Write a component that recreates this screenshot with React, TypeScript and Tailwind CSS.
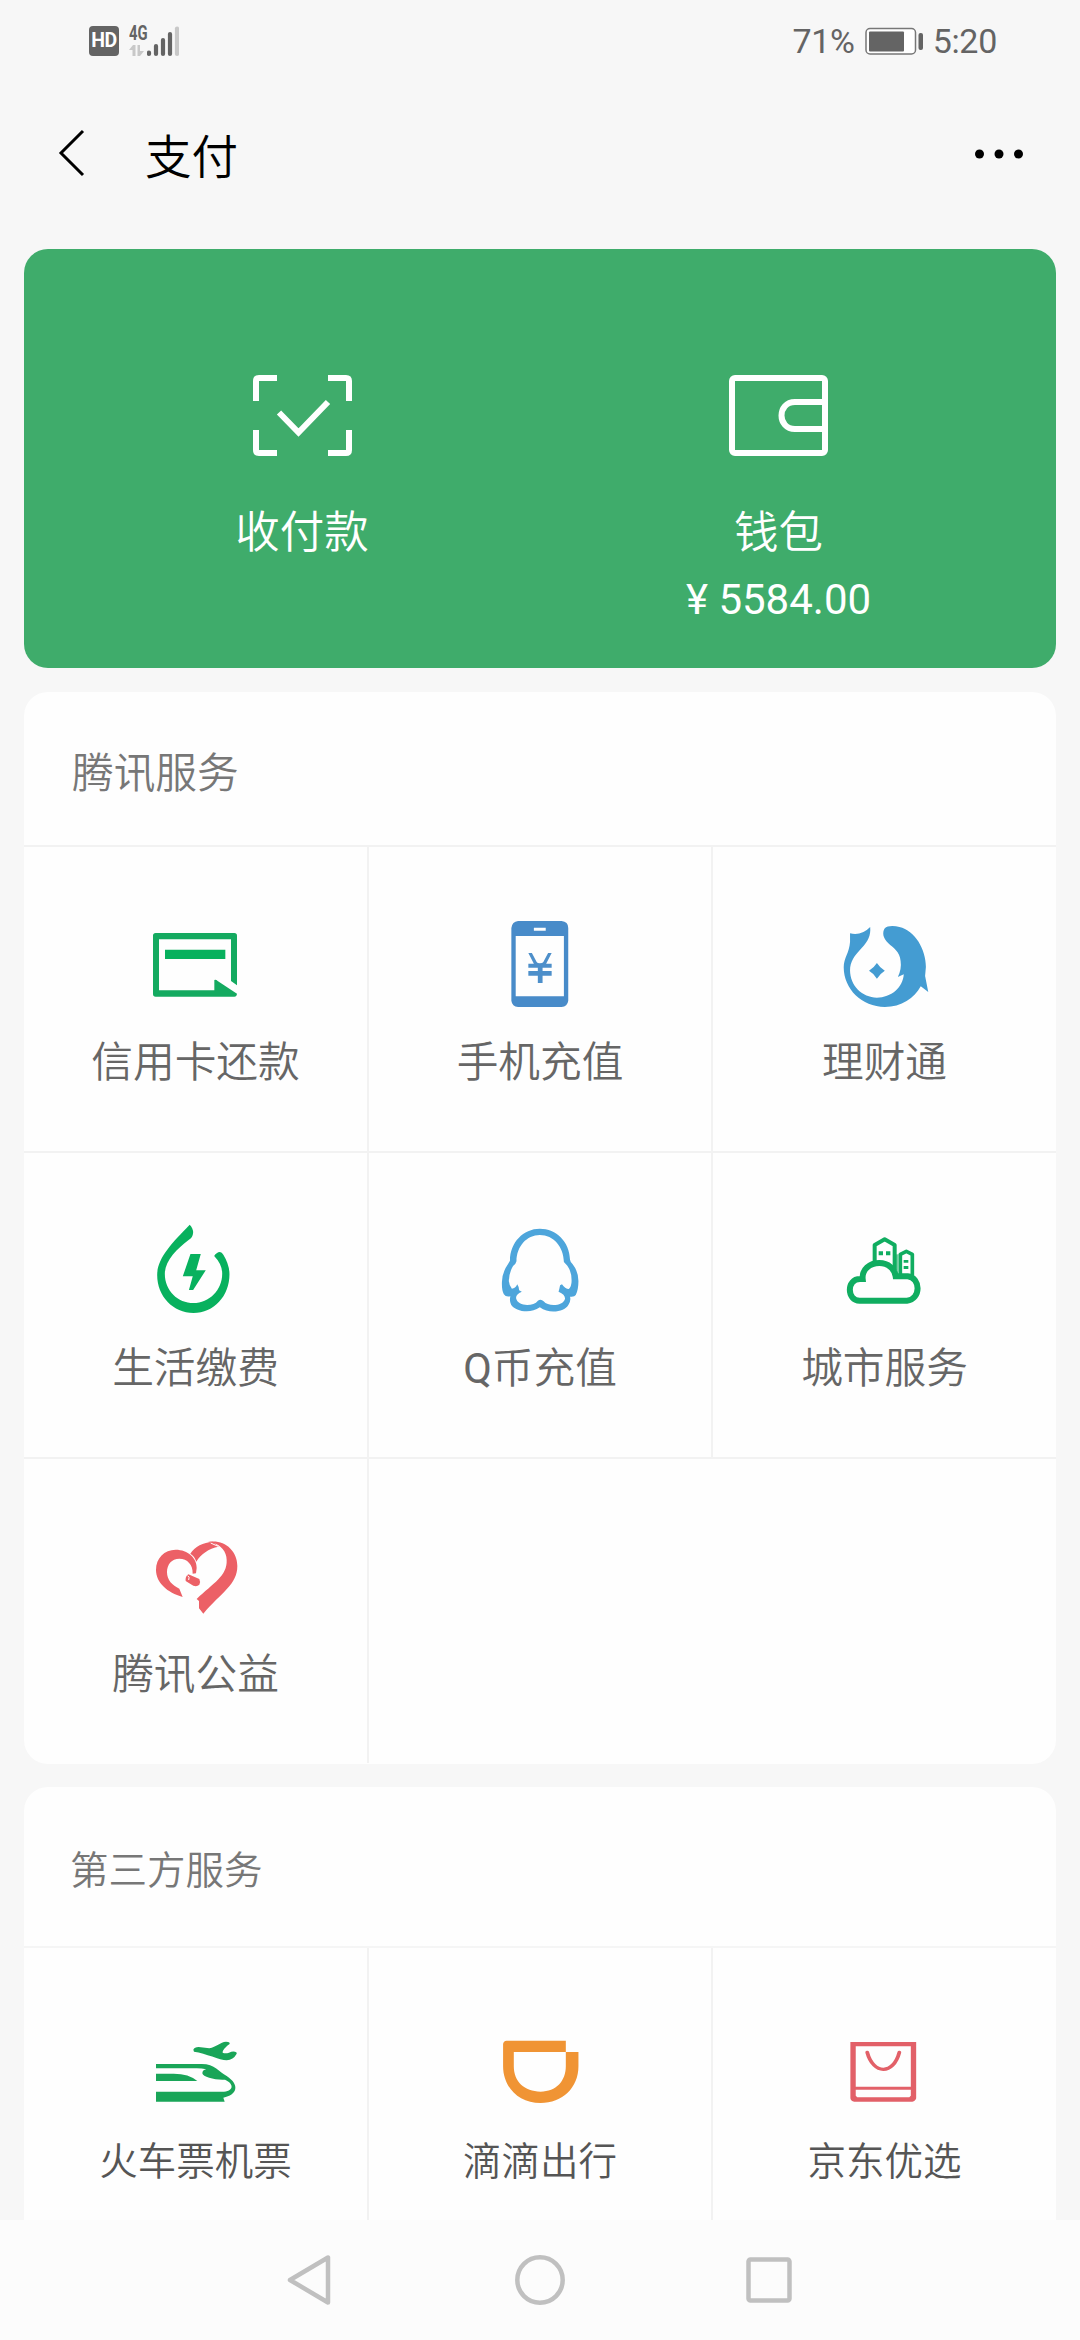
import type { ReactNode } from "react";

const GREEN = "#08b15e";

type IconProps = {
    viewBox: string;
    children: ReactNode;
};

const Icon = ({ viewBox, children }: IconProps) => (
    <svg className="w-24 h-24 shrink-0" viewBox={viewBox} preserveAspectRatio="none" fill="none">
        {children}
    </svg>
);

const CreditCardIcon = () => (
    <Icon viewBox="264 111 288 288">
        <path
            fill="#14aa60"
            d="M287 162H523Q531 162 531 170V319L513 306V181H297V334H463V303Q468 301 473 306L531 344Q530 353 523 353H287Q279 353 279 345V170Q279 162 287 162Z"
        />
        <path fill={GREEN} d="M315 212H496V240H315Z" />
    </Icon>
);

const PhoneIcon = () => (
    <Icon viewBox="233 111 243 288">
        <path
            fill="#488bc9"
            fillRule="evenodd"
            d="M299 126H409Q426 128 426 147V365Q424 382 409 384H299Q284 382 282 365V147Q284 128 299 126ZM293 171V352H415V171ZM339 146V155H369V146Z"
        />
        <path
            fill="#4d8fca"
            d="M325 222H334L346 249Q348 253 354 253Q361 253 363 249L375 222H384L370 254H384V266H361V276H384V290H361V312H349V290H325V276H349V266H325V254H339Z"
        />
    </Icon>
);

const FishIcon = () => (
    <Icon viewBox="1103 111 243 288">
        <path
            fill="#449cd2"
            d="M1136 163Q1165 171 1187 144C1189 170 1181 188 1166 206C1147 230 1136 247 1136 274C1136 320 1167 356 1204 356C1240 356 1270 326 1272 286L1257 294Q1267 270 1264 246C1262 217 1245 207 1233 193C1219 178 1217 160 1224 148C1230 139 1248 139 1261 144C1300 155 1328 210 1328 264L1326 291L1334 339L1315 322C1299 358 1266 384 1224 384C1166 384 1120 330 1120 265C1120 237 1134 222 1136 189Z"
        />
        <path fill="#449cd2" d="M1204 252Q1212 267 1224 275Q1213 283 1204 299Q1196 283 1184 275Q1196 267 1204 252Z" />
    </Icon>
);

const UtilitiesIcon = () => (
    <Icon viewBox="230 96 251 288">
        <path
            fill={GREEN}
            d="M339 104Q348 114 348 128Q347 143 337 149C304 177 274 214 274 251C274 302 308 339 349 339C390 339 424 300 424 251Q424 223 403 198Q409 187 418 186Q423 187 427 194Q443 224 443 253C443 319 402 369 349 369C296 369 254 319 254 255C254 206 289 163 339 104Z"
        />
        <path fill={GREEN} d="M341 192H368L356 241H381L348 300H337L347 259H321Z" />
    </Icon>
);

const PenguinIcon = () => (
    <Icon viewBox="1129 96 251 288">
        <path
            fill="#4da5db"
            fillRule="evenodd"
            d="M1254 116C1297 116 1332 155 1333 209Q1334 217 1340 223Q1355 245 1355 273Q1355 299 1348 315Q1344 322 1333 320Q1336 332 1329 344C1320 364 1281 374 1254 352C1229 373 1190 364 1179 344Q1174 334 1177 319Q1165 322 1160 313Q1154 300 1155 275Q1156 246 1171 222L1176 212C1176 157 1211 116 1254 116ZM1254 135C1220 135 1193 169 1193 214Q1192 221 1184 228Q1173 250 1173 273Q1174 287 1181 296Q1190 296 1195 283Q1200 291 1200 301L1207 305Q1191 312 1192 325C1196 350 1237 351 1249 332Q1257 326 1264 334C1276 351 1315 349 1320 326Q1320 313 1303 305Q1305 298 1307 286L1312 283Q1320 297 1330 297Q1338 287 1337 269Q1337 245 1326 227L1317 216C1316 170 1290 135 1254 135Z"
        />
    </Icon>
);

const CityIcon = () => (
    <Icon viewBox="228 96 288 288">
        <g stroke="#10ad60" strokeLinejoin="round">
            <path
                strokeWidth="18"
                strokeLinejoin="miter"
                d="M296 332C257 332 256 267 297 267H305C302 239 326 219 355 219C382 219 401 237 404 259H440C480 263 480 328 438 332Z"
            />
            <path strokeWidth="12" d="M341 216V165L371 148L401 165V240" />
            <path strokeWidth="11" d="M418 256V193L436 184L454 193V258" />
            <path strokeWidth="8" d="M408 193V250" opacity=".6" />
        </g>
        <path fill="#10ad60" d="M353 184H366V196H353ZM375 184H388V196H375ZM428 210H442V218H428ZM428 228H442V237H428Z" />
    </Icon>
);

const HeartIcon = () => (
    <Icon viewBox="264 81 288 288">
        <g fill="#ec6066">
            <path d="M368 288C322 275 288 245 288 207C288 171 313 146 347 146C384 146 411 171 410 201L408 217L398 218C399 191 382 173 358 173C335 173 321 190 321 214C321 237 337 254 358 263Z" />
            <path d="M391 158C404 136 430 124 458 122L476 137C446 142 422 160 409 182Q404 166 391 158Z" />
            <path d="M444 123C491 114 532 147 532 195C532 251 484 274 430 338L417 322V300L410 294C460 246 502 225 500 177C500 151 481 132 461 127Z" />
            <path d="M385 220L418 234Q422 241 418 251Q411 258 400 254L377 240Q375 227 385 220Z" />
        </g>
        <path d="M383 224Q390 227 386 237" stroke="#fff" strokeWidth="3" />
        <path d="M452 126L474 136" stroke="#fff" strokeWidth="3" />
    </Icon>
);

const TravelIcon = () => (
    <Icon viewBox="264 90 288 288">
        <g fill="#19a558">
            <path d="M400 179Q403 171 416 171L448 175C469 171 481 156 498 155Q513 156 508 163C499 169 487 181 488 188Q496 192 507 188Q517 183 525 185Q533 187 529 193Q520 210 500 211C479 210 438 190 402 185Z" />
            <path d="M288 222H425C465 222 477 246 500 258C541 285 531 315 490 323L494 335H288V305H492C525 301 519 279 495 269C468 271 428 262 427 250Q427 240 439 238Q419 233 399 235H288Z" />
            <path d="M288 251H341Q387 251 412 273H288Z" />
        </g>
    </Icon>
);

const DidiIcon = () => (
    <Icon viewBox="136 90 251 288">
        <path
            fill="#f09434"
            fillRule="evenodd"
            d="M174 152H329V186H362V229C362 294 320 339 263 339C206 339 165 292 165 229V162Q166 153 174 152ZM193 186V229C193 275 221 305 263 305C304 305 329 273 329 229V186Z"
        />
    </Icon>
);

const ShoppingBagIcon = () => (
    <Icon viewBox="1035 90 251 288">
        <path
            fill="#e26068"
            fillRule="evenodd"
            d="M1070 156H1242V325Q1240 334 1232 335H1080Q1071 334 1070 325ZM1084 169V290H1228V169ZM1084 299V317L1088 322H1224L1228 317V299Z"
        />
        <path d="M1114 187C1130 254 1182 256 1198 187" stroke="#e26068" strokeWidth="10" strokeLinecap="round" />
    </Icon>
);

const StatusBar = () => (
    <div className="flex h-[82px] items-center justify-between pl-[89px] pr-[83px] font-normal text-[#646464]">
        <div className="flex items-center">
            <div className="flex h-[30px] w-[30px] items-center justify-center rounded bg-[#646464] text-[19.500px] font-bold leading-none tracking-tight text-white">
                HD
            </div>
            <div className="ml-2.5 flex h-8 w-[18px] flex-col">
                <span className="h-[17px] origin-left scale-x-[.74] text-[20px] font-bold leading-[17px]">4G</span>
                <svg className="mt-[3px] h-[11px] w-[15px]" viewBox="0 0 15 11" fill="#c8c8c8">
                    <path d="M0 5L4 0H6.500V11H3.500V5ZM8.500 0H11V6H15L11 11H8.500Z" />
                </svg>
            </div>
            <svg className="h-8 w-8" viewBox="0 0 32 32" strokeWidth="4.200" strokeLinecap="round" stroke="#646464">
                <path d="M2 27.500V29M9 21V29M16 15V29M23 9V29" />
                <path d="M30 3.500V29" stroke="#c8c8c8" />
            </svg>
        </div>
        <div className="flex items-center text-[34px] leading-none tracking-[-0.300px]">
            <span>71%</span>
            <svg className="ml-2.5 h-7 w-[59px]" viewBox="0 0 59 28">
                <rect x="1" y="1.500" width="49.500" height="25.500" rx="4" fill="#fff" stroke="#777" strokeWidth="1.500" />
                <rect x="4" y="4.500" width="35" height="20" rx="1" fill="#646464" />
                <rect x="53.500" y="6" width="4.500" height="17" rx="2" fill="#646464" />
            </svg>
            <span className="ml-[9px]">5:20</span>
        </div>
    </div>
);

const Header = () => (
    <header className="flex h-[143px] items-center pl-[58px] pr-14 text-black">
        <svg className="mb-px h-12 w-7" viewBox="0 0 28 48" fill="none" stroke="#000" strokeWidth="3">
            <path d="M25 2L3 24L25 46" />
        </svg>
        <h1 className="ml-[59px] mt-2.5 flex-1 text-[46.500px] leading-none">支付</h1>
        <svg className="h-3 w-[50px]" viewBox="0 0 50 12">
            <circle cx="5.500" cy="6" r="4.500" />
            <circle cx="25" cy="6" r="4.500" />
            <circle cx="44.500" cy="6" r="4.500" />
        </svg>
    </header>
);

const WalletCard = () => (
    <section className="grid h-[419px] grid-cols-[556px_1fr] rounded-3xl bg-[#3fac6b] pt-[126px] text-white">
        <div className="flex flex-col items-center">
            <svg className="h-[81px] w-[99px]" viewBox="0 0 99 81" fill="none" stroke="#fff" strokeWidth="6">
                <path d="M3 26V6Q3 3 6 3H24M75 3H93Q96 3 96 6V26M96 55V75Q96 78 93 78H75M24 78H6Q3 78 3 75V55" />
                <path d="M26 37.500L45.500 57.500L75 27" />
            </svg>
            <span className="mt-[47px] text-[44.500px] leading-[60px]">收付款</span>
        </div>
        <div className="flex w-[397px] flex-col items-center">
            <svg className="h-[81px] w-[99px]" viewBox="0 0 99 81" fill="none" stroke="#fff" strokeWidth="6">
                <rect x="3" y="3" width="93" height="75" rx="3" />
                <path d="M96 27H66C48 27 48 54 66 54H96" />
            </svg>
            <span className="mt-[47px] text-[44.500px] leading-[60px]">钱包</span>
            <span className="mt-[7px] text-[42px] font-normal leading-[60px]">¥ 5584.00</span>
        </div>
    </section>
);

type Service = {
    id: string;
    label: ReactNode;
    icon: ReactNode;
};

const TENCENT_SERVICES: Service[] = [
    { id: "credit", label: "信用卡还款", icon: <CreditCardIcon /> },
    { id: "phone", label: "手机充值", icon: <PhoneIcon /> },
    { id: "wealth", label: "理财通", icon: <FishIcon /> },
    { id: "utilities", label: "生活缴费", icon: <UtilitiesIcon /> },
    {
        id: "qcoin",
        label: (
            <>
                <span className="font-normal">Q</span>币充值
            </>
        ),
        icon: <PenguinIcon />,
    },
    { id: "city", label: "城市服务", icon: <CityIcon /> },
    { id: "charity", label: "腾讯公益", icon: <HeartIcon /> },
];

const THIRD_PARTY_SERVICES: Service[] = [
    { id: "travel", label: "火车票机票", icon: <TravelIcon /> },
    { id: "didi", label: "滴滴出行", icon: <DidiIcon /> },
    { id: "jd", label: "京东优选", icon: <ShoppingBagIcon /> },
];

const ServiceCell = ({ item, last }: { item: Service; last: boolean }) => (
    <div className={`flex flex-col items-center ${last ? "" : "border-r-2 border-[#f2f2f2]"}`}>
        {item.icon}
        <span className="mt-[21px]">{item.label}</span>
    </div>
);

const TencentServices = () => (
    <section className="mt-6 h-[1072px] shrink-0 overflow-hidden rounded-3xl bg-[#fefefe] text-[41.700px] leading-[60px] text-[#666]">
        <h2 className="flex h-[153px] items-center pl-12 pt-2.5 text-[#777]">腾讯服务</h2>
        {[0, 3, 6].map((start) => (
            <div
                key={start}
                className="grid h-[306px] grid-cols-[345px_344px_343px] border-t-2 border-[#f2f2f2] *:pt-[69px]"
            >
                {TENCENT_SERVICES.slice(start, start + 3).map((item, i) => (
                    <ServiceCell key={item.id} item={item} last={i === 2} />
                ))}
            </div>
        ))}
    </section>
);

const ThirdPartyServices = () => (
    <section className="mt-[23px] flex-1 rounded-t-3xl bg-[#fefefe] text-[38.500px] leading-[50px] text-[#555]">
        <h2 className="flex h-[159px] items-center pl-[46px] pt-2 text-[#777]">第三方服务</h2>
        <div className="grid h-[274px] grid-cols-[345px_344px_343px] border-t-2 border-[#f5f5f5] *:pt-[72px]">
            {THIRD_PARTY_SERVICES.map((item, i) => (
                <ServiceCell key={item.id} item={item} last={i === 2} />
            ))}
        </div>
    </section>
);

const NavBar = () => (
    <nav className="flex h-[120px] shrink-0 items-center justify-center gap-[179px] bg-[#fcfcfc]">
        <svg className="h-[50px] w-[50px]" viewBox="0 0 50 50" fill="none" stroke="#c0c0c0" strokeWidth="4.500" strokeLinejoin="round">
            <path d="M42 2.500V47.500L4 25Z" />
        </svg>
        <svg className="h-[50px] w-[50px]" viewBox="0 0 50 50" fill="none" stroke="#c0c0c0" strokeWidth="4.500">
            <circle cx="25" cy="25" r="22.700" />
        </svg>
        <svg className="h-[50px] w-[50px]" viewBox="0 0 50 50" fill="none" stroke="#c0c0c0" strokeWidth="4.500">
            <rect x="4.500" y="4.500" width="41" height="41" rx="2" />
        </svg>
    </nav>
);

export default function App() {
    return (
        <div className="flex h-[2340px] w-[1080px] flex-col overflow-hidden bg-[#f7f7f7] font-['Roboto','Noto_Sans_CJK_SC',sans-serif] font-[350]">
            <StatusBar />
            <Header />
            <main className="mt-6 flex flex-1 flex-col px-6">
                <WalletCard />
                <TencentServices />
                <ThirdPartyServices />
            </main>
            <NavBar />
        </div>
    );
}
